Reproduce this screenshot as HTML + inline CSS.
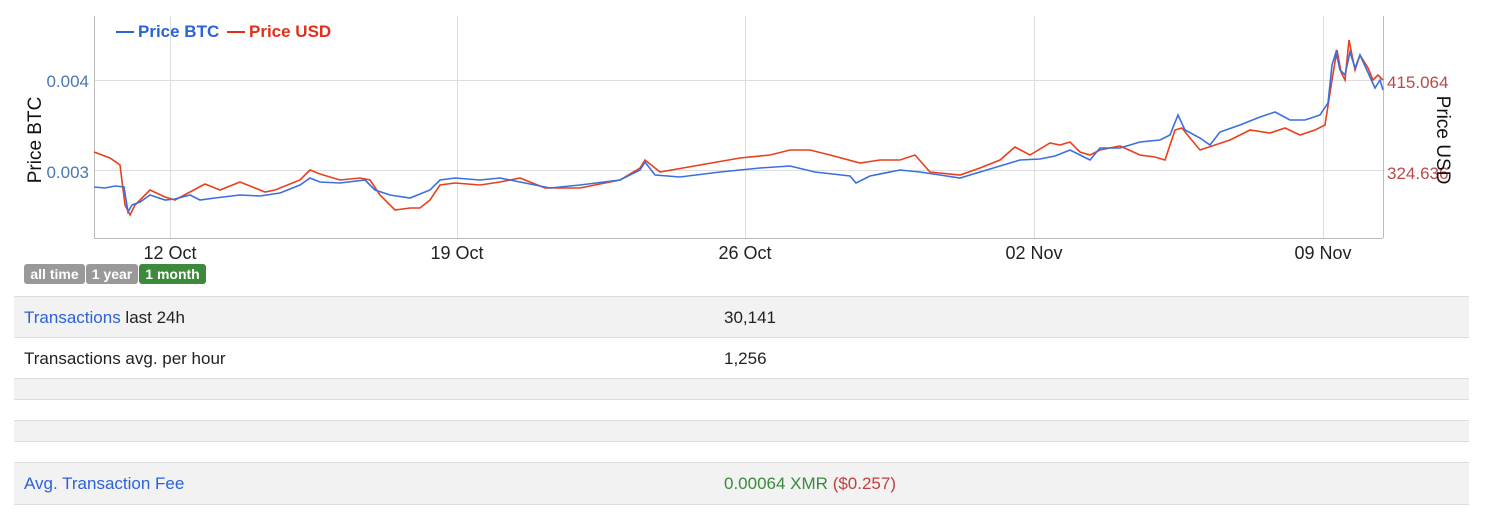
<!DOCTYPE html>
<html><head><meta charset="utf-8"><style>
body{margin:0;width:1488px;height:518px;background:#fff;font-family:"Liberation Sans",sans-serif;position:relative;overflow:hidden}
.abs{position:absolute}
.row{position:absolute;left:14px;width:1455px;border-top:1px solid #ddd;font-size:17px;color:#222}
.g{background:#f2f2f2}
.row span{position:absolute;top:11px}
.btn{position:absolute;top:264px;height:20px;font-size:14px;font-weight:bold;color:#fff;line-height:20px;text-align:center;border-radius:3px}
</style></head><body>
<svg class="abs" style="left:0;top:0" width="1488" height="300">
<g stroke="#ddd" stroke-width="1">
<line x1="94" y1="80.5" x2="1383" y2="80.5"/><line x1="94" y1="170.5" x2="1383" y2="170.5"/>
<line x1="170.5" y1="16" x2="170.5" y2="238"/><line x1="457.5" y1="16" x2="457.5" y2="238"/>
<line x1="745.5" y1="16" x2="745.5" y2="238"/><line x1="1034.5" y1="16" x2="1034.5" y2="238"/>
<line x1="1323.5" y1="16" x2="1323.5" y2="238"/>
</g>
<g stroke="#bbb"><line x1="94.5" y1="16" x2="94.5" y2="238"/><line x1="94" y1="238.5" x2="1383" y2="238.5"/><line x1="1383.5" y1="16" x2="1383.5" y2="238"/></g>
<polyline fill="none" stroke="#e8401c" stroke-width="1.6" points="94,152 110,158 120,165 125,205 130,215 135,205 150,190 165,197 175,200 190,192 205,184 220,190 240,182 265,192 275,190 300,180 310,170 320,174 340,180 360,178 370,180 380,195 395,210 410,208 420,208 430,200 440,185 455,183 480,185 500,182 520,178 545,188 580,188 620,180 640,168 645,160 660,172 700,165 740,158 770,155 790,150 810,150 830,155 860,163 880,160 900,160 915,155 930,172 960,175 980,168 1000,160 1015,147 1030,155 1050,143 1060,145 1070,142 1080,152 1090,155 1100,150 1120,146 1140,155 1155,157 1165,160 1175,130 1182,128 1190,138 1200,150 1215,145 1230,140 1250,130 1270,133 1285,128 1300,135 1315,130 1325,125 1332,80 1337,50 1341,72 1345,80 1349,40 1355,70 1360,55 1368,68 1373,80 1378,75 1383,80"/>
<polyline fill="none" stroke="#3a6fe0" stroke-width="1.6" points="94,187 105,188 115,186 124,187 128,212 132,205 140,202 150,195 165,200 175,199 190,195 200,200 215,198 240,195 260,196 280,193 300,185 310,178 320,182 340,183 365,180 375,190 390,195 410,198 430,190 440,180 455,178 480,180 500,178 520,182 550,188 580,185 620,180 640,170 645,162 655,175 680,177 720,172 740,170 760,168 790,166 815,172 850,176 856,183 870,176 900,170 920,172 940,175 960,178 980,172 1000,166 1020,160 1040,159 1055,156 1070,150 1080,155 1090,160 1100,148 1120,148 1140,142 1160,140 1170,135 1178,115 1185,130 1200,138 1210,145 1220,132 1240,125 1260,117 1275,112 1290,120 1305,120 1320,115 1328,103 1332,65 1336,52 1340,70 1345,75 1350,52 1355,68 1360,55 1370,77 1375,88 1380,80 1383,90"/>
<line x1="116" y1="32" x2="134" y2="32" stroke="#2a62d8" stroke-width="2"/>
<text x="138" y="37" font-size="17" font-weight="bold" fill="#2a62d8" font-family="Liberation Sans">Price BTC</text>
<line x1="227" y1="32" x2="245" y2="32" stroke="#e0301a" stroke-width="2"/>
<text x="249" y="37" font-size="17" font-weight="bold" fill="#e0301a" font-family="Liberation Sans">Price USD</text>
<g font-size="17" fill="#4a78b0" font-family="Liberation Sans" text-anchor="end"><text x="89" y="87">0.004</text><text x="89" y="178">0.003</text></g>
<g font-size="17" fill="#b84a4a" font-family="Liberation Sans"><text x="1387" y="88">415.064</text><text x="1387" y="179">324.636</text></g>
<text transform="translate(41,140) rotate(-90)" text-anchor="middle" font-size="19" fill="#111" font-family="Liberation Sans">Price BTC</text>
<text transform="translate(1437,140) rotate(90)" text-anchor="middle" font-size="19" fill="#111" font-family="Liberation Sans">Price USD</text>
<g font-size="18" fill="#222" font-family="Liberation Sans" text-anchor="middle"><text x="170" y="259">12 Oct</text><text x="457" y="259">19 Oct</text><text x="745" y="259">26 Oct</text><text x="1034" y="259">02 Nov</text><text x="1323" y="259">09 Nov</text></g>
</svg>
<div class="btn" style="left:24px;width:61px;background:#999">all time</div>
<div class="btn" style="left:86px;width:52px;background:#999">1 year</div>
<div class="btn" style="left:139px;width:67px;background:#3d8a3d">1 month</div>
<div class="row g" style="top:296px;height:41px"><span style="left:10px"><span style="position:static;color:#2a62d8">Transactions</span> last 24h</span><span style="left:710px">30,141</span></div>
<div class="row" style="top:337px;height:41px"><span style="left:10px">Transactions avg. per hour</span><span style="left:710px">1,256</span></div>
<div class="row g" style="top:378px;height:21px"></div>
<div class="row" style="top:399px;height:21px"></div>
<div class="row g" style="top:420px;height:21px"></div>
<div class="row" style="top:441px;height:21px"></div>
<div class="row g" style="top:462px;height:41px;border-bottom:1px solid #ddd"><span style="left:10px;color:#2a62d8">Avg. Transaction Fee</span><span style="left:710px;color:#3a8a3a">0.00064 XMR <span style="position:static;color:#c04040">($0.257)</span></span></div>
</body></html>
